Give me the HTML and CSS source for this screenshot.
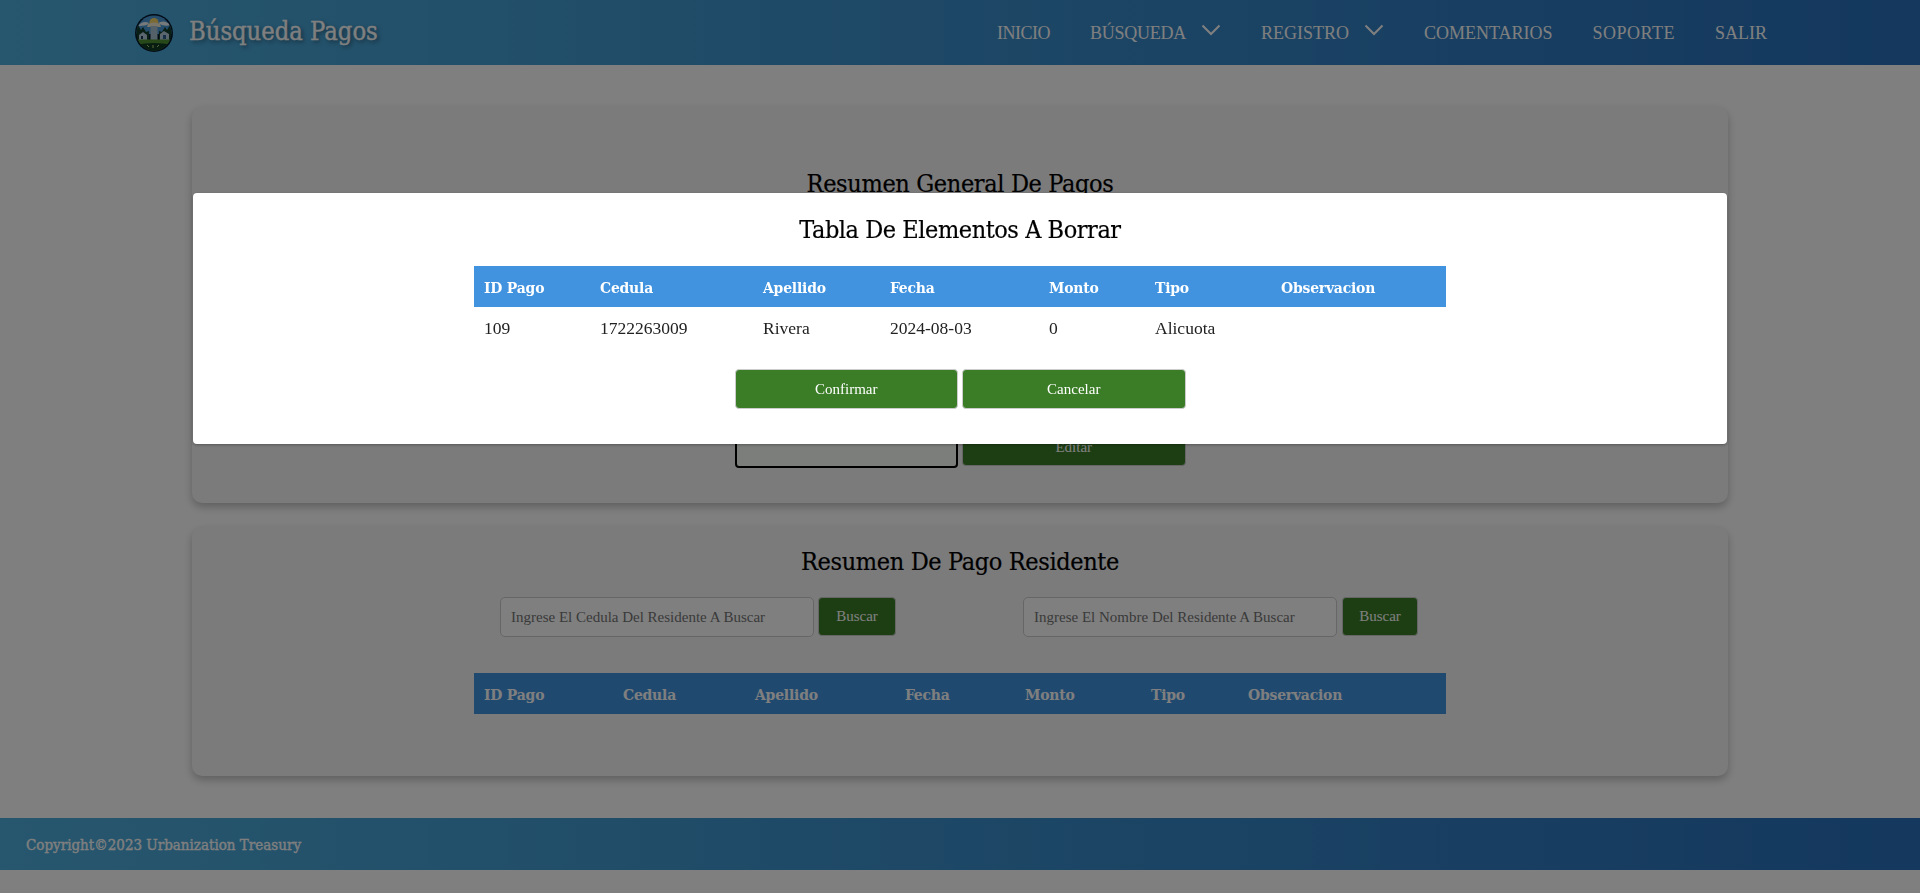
FILE: index.html
```html
<!DOCTYPE html>
<html lang="es">
<head>
<meta charset="utf-8">
<title>Búsqueda Pagos</title>
<link rel="stylesheet" href="styles.css">
</head>
<body>
<header class="topbar">
  <div class="brand">
    <svg class="logo" viewBox="0 0 38 38" aria-hidden="true">
      <defs><clipPath id="lc"><circle cx="19" cy="19" r="17.500"/></clipPath></defs>
      <circle cx="19" cy="19" r="19" fill="#05182c"/>
      <g clip-path="url(#lc)">
        <rect width="38" height="20" fill="#4a9ad6"/>
        <path d="M3 12q5-6 11-3q-1 3-11 3zM23 9q6-4 13 2q-8 2-13-2z" fill="#eef5f7"/>
        <circle cx="19" cy="8.500" r="4.500" fill="#f6d469"/>
        <path d="M13 10q6-3 12 0l1 3H12z" fill="#f2ead0"/>
        <path d="M0 26V16l3-5 3 5 2-3 3 5 3-1v9zM24 26v-9l3 1 3-5 2 3 3-5 3 5v10z" fill="#123d28"/>
        <rect x="15.500" y="12" width="7" height="14" fill="#a9c3d2"/>
        <path d="M4 21l4-3 4 3v5H4zM25 20l4-3 5 3v6h-9z" fill="#b4cbdd"/>
        <rect x="6" y="22" width="2" height="3" fill="#16344e"/>
        <rect x="28" y="21" width="3" height="4" fill="#2b5f8e"/>
        <rect y="25.500" width="38" height="13" fill="#4f9130"/>
        <path d="M0 31q19-4 38 0v7H0z" fill="#0f3a24"/>
        <path d="M12 31l2 2M18 31v3M24 31l-2 2" stroke="#b7d56a" stroke-width="1"/>
      </g>
    </svg>
    <span class="brand-name">Búsqueda Pagos</span>
  </div>
  <nav class="nav">
    <a class="nav-link nav-inicio">INICIO</a>
    <a class="nav-link nav-drop nav-busqueda">BÚSQUEDA
      <svg class="chev" viewBox="0 0 20 12"><path d="M1.500 1.500L10 10l8.500-8.500"/></svg></a>
    <a class="nav-link nav-drop">REGISTRO
      <svg class="chev" viewBox="0 0 20 12"><path d="M1.500 1.500L10 10l8.500-8.500"/></svg></a>
    <a class="nav-link">COMENTARIOS</a>
    <a class="nav-link nav-soporte">SOPORTE</a>
    <a class="nav-link">SALIR</a>
  </nav>
</header>

<main class="content">
  <section class="card card-general">
    <h2 class="card-title title-general">Resumen General De Pagos</h2>
    <div class="actions">
      <button class="btn btn-focus" type="button"></button>
      <button class="btn btn-edit" type="button">Editar</button>
    </div>
  </section>

  <section class="card card-resident">
    <h2 class="card-title">Resumen De Pago Residente</h2>
    <div class="search-row">
      <div class="search search-id">
        <input class="search-input" type="text" placeholder="Ingrese El Cedula Del Residente A Buscar">
        <button class="btn btn-search" type="button">Buscar</button>
      </div>
      <div class="search search-name">
        <input class="search-input" type="text" placeholder="Ingrese El Nombre Del Residente A Buscar">
        <button class="btn btn-search" type="button">Buscar</button>
      </div>
    </div>
    <table class="grid grid-resident">
      <colgroup><col class="r1"><col class="r2"><col class="r3"><col class="r4"><col class="r5"><col class="r6"><col class="r7"></colgroup>
      <thead><tr><th>ID Pago</th><th>Cedula</th><th>Apellido</th><th>Fecha</th><th>Monto</th><th>Tipo</th><th>Observacion</th></tr></thead>
    </table>
  </section>
</main>

<footer class="footer">Copyright©2023 Urbanization Treasury</footer>

<div class="backdrop"></div>

<div class="modal">
  <h2 class="modal-title">Tabla De Elementos A Borrar</h2>
  <table class="grid grid-modal">
    <colgroup><col class="m1"><col class="m2"><col class="m3"><col class="m4"><col class="m5"><col class="m6"><col class="m7"></colgroup>
    <thead><tr><th>ID Pago</th><th>Cedula</th><th>Apellido</th><th>Fecha</th><th>Monto</th><th>Tipo</th><th>Observacion</th></tr></thead>
    <tbody><tr><td>109</td><td>1722263009</td><td>Rivera</td><td>2024-08-03</td><td>0</td><td>Alicuota</td><td></td></tr></tbody>
  </table>
  <div class="actions modal-actions">
    <button class="btn" type="button">Confirmar</button>
    <button class="btn" type="button">Cancelar</button>
  </div>
</div>
</body>
</html>
```
FILE: styles.css
```css
* { box-sizing: border-box; }

html, body { margin: 0; padding: 0; }

body {
  height: 893px;
  overflow: hidden;
  background: #fff;
  color: #000;
  font-family: "DejaVu Serif Condensed", "DejaVu Serif", serif;
  font-stretch: condensed;
}

.topbar, .footer {
  background: linear-gradient(90deg, #4eaedc 0%, #2870bc 100%);
}

.topbar {
  height: 65px;
  display: flex;
  align-items: center;
  justify-content: space-between;
  padding: 0 153px 0 135px;
}

.brand { display: flex; align-items: center; gap: 16px; }

.logo { width: 38px; height: 38px; display: block; }

.brand-name {
  color: #fff;
  font-size: 25.300px;
  -webkit-text-stroke: .35px #fff;
  text-shadow: 2px 2px 4px rgba(0, 0, 0, .5);
  margin-top: -3px;
}

.nav {
  display: flex;
  align-items: center;
  gap: 40px;
  font-family: "Liberation Serif", serif;
  font-stretch: normal;
  font-size: 18px;
  color: #fff;
  padding-top: 1px;
}

.nav-link { display: flex; align-items: center; white-space: nowrap; }

.nav-drop { gap: 15px; }

.nav-inicio { letter-spacing: -.5px; }

.nav-busqueda { letter-spacing: -.25px; }

.nav-soporte { letter-spacing: .5px; }

.chev {
  width: 20px;
  height: 12px;
  margin-top: -6px;
  fill: none;
  stroke: #fff;
  stroke-width: 2;
}

.content {
  width: 1536px;
  margin: 42px auto;
  display: flex;
  flex-direction: column;
  gap: 24px;
}

.card {
  background: #f6f6f6;
  border-radius: 10px;
  box-shadow: 0 4px 8px rgba(0, 0, 0, .25);
}

.card-general {
  height: 396px;
  display: flex;
  flex-direction: column;
}

.card-resident {
  height: 249px;
  padding-top: 19px;
}

.card-title, .modal-title {
  margin: 0;
  text-align: center;
  font-size: 25px;
  letter-spacing: -.36px;
  line-height: 32px;
  font-weight: 400;
  -webkit-text-stroke: .2px #000;
}

.title-general { margin-top: 61px; }

.modal-title { letter-spacing: -.45px; }

.actions {
  display: flex;
  justify-content: center;
  gap: 4px;
}

.card-general .actions { margin-top: auto; margin-bottom: 35px; }

.btn {
  width: 223.500px;
  height: 40px;
  padding: 0;
  border: 1px solid #ccc;
  border-radius: 4px;
  background: #3a7d26;
  color: #fff;
  font-family: "Liberation Serif", serif;
  font-size: 15px;
}

.btn-focus {
  background: #f8fcf6;
  height: 42px;
  border: 2px solid #000;
}

.btn-edit { padding-top: 2px; }

.search-row {
  display: flex;
  justify-content: center;
  gap: 127px;
  margin-top: 19px;
  padding-right: 2px;
}

.search { display: flex; gap: 5px; }

.search-id { width: 396px; gap: 4px; }

.search-name { width: 395px; }

.search-input {
  flex: 1;
  min-width: 0;
  height: 40px;
  padding: 0 10px;
  border: 1px solid #ccc;
  border-radius: 5px;
  background: #fff;
  font-family: "Liberation Serif", serif;
  font-size: 15px;
}

.search-input::placeholder { color: #757575; opacity: 1; }

.btn-search { width: 78px; height: 39px; }

.search-name .btn-search { width: 76px; }

.grid {
  width: 972px;
  margin: 0 auto;
  border-collapse: collapse;
  table-layout: fixed;
}

.grid th {
  height: 41px;
  padding: 2px 10px 0;
  background: #4193df;
  color: #fff;
  text-align: left;
  font-size: 15.500px;
  letter-spacing: -.2px;
  font-weight: 700;
}

.grid td {
  height: 43px;
  padding: 0 10px;
  font-family: "Liberation Serif", serif;
  font-size: 17.500px;
  color: #222;
}

.grid-resident { margin-top: 36px; }

.m1 { width: 116px; } .m2 { width: 163px; } .m3 { width: 127px; } .m4 { width: 159px; }
.m5 { width: 106px; } .m6 { width: 126px; } .m7 { width: 175px; }

.r1 { width: 139px; } .r2 { width: 132px; } .r3 { width: 150px; } .r4 { width: 120px; }
.r5 { width: 126px; } .r6 { width: 97px; } .r7 { width: 208px; }

.footer {
  height: 52px;
  display: flex;
  align-items: center;
  padding: 2px 0 0 26px;
  color: #fff;
  font-size: 15px;
  -webkit-text-stroke: .35px #fff;
}

.backdrop {
  position: fixed;
  inset: 0;
  background: rgba(0, 0, 0, .5);
}

.modal {
  position: fixed;
  top: 193px;
  left: 193px;
  width: 1534px;
  height: 251px;
  padding-top: 21px;
  background: #fff;
  border-radius: 4px;
  box-shadow: 0 1px 3px rgba(0, 0, 0, .3);
}

.modal-title { margin-bottom: 20px; }

.modal-actions { margin-top: 19px; }
```
